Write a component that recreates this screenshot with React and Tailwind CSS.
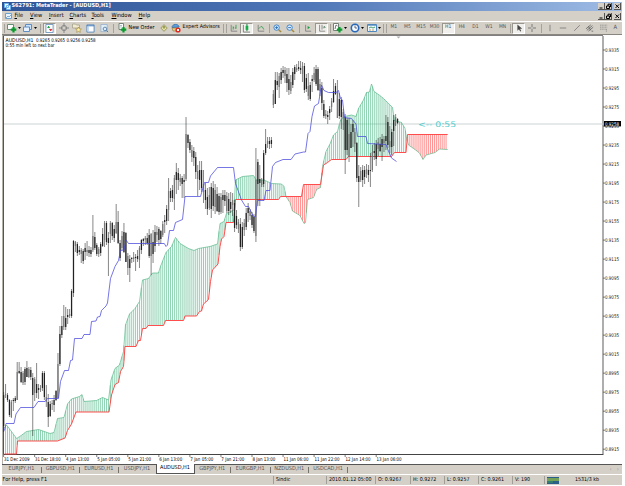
const FIRST_BAR = 3.63;
const BAR_STEP = 1.9406;

// [high, low, body top, body bottom] for every hour
const CANDLES = [
  [392, 432, 395, 426], [384, 398, 394, 395], [393, 402, 395, 400], [399, 417, 400, 415], [400, 418, 402, 417],
  [398, 411, 400, 401], [396, 403, 398, 401], [362, 400, 372, 400], [362, 374, 371, 373], [367, 383, 372, 382],
  [371, 385, 373, 383], [367, 385, 369, 382], [361, 377, 368, 377], [367, 378, 369, 377], [367, 380, 370, 377],
  [373, 436, 378, 395], [377, 401, 379, 393], [363, 398, 384, 393], [384, 399, 388, 390], [385, 392, 388, 390],
  [371, 391, 373, 388], [371, 400, 373, 397], [385, 407, 397, 402], [394, 427, 402, 417], [401, 417, 404, 416],
  [400, 410, 403, 404], [395, 412, 400, 405], [390, 401, 391, 400], [353, 398, 364, 398], [326, 366, 334, 364],
  [316, 338, 326, 335], [305, 330, 316, 327], [307, 330, 318, 327], [309, 324, 315, 317], [309, 318, 314, 316],
  [289, 318, 291, 316], [240, 297, 241, 293], [241, 252, 242, 246], [242, 256, 244, 253], [246, 255, 250, 252],
  [248, 263, 250, 254], [249, 264, 251, 261], [243, 260, 248, 252], [241, 256, 250, 252], [246, 257, 250, 253],
  [247, 257, 250, 254], [215, 252, 236, 250], [232, 250, 237, 248], [243, 256, 245, 254], [247, 257, 249, 254],
  [242, 256, 244, 253], [228, 247, 234, 246], [221, 247, 223, 240], [221, 245, 223, 242], [232, 276, 238, 243],
  [221, 243, 223, 234], [222, 240, 223, 236], [225, 242, 229, 238], [204, 234, 222, 233], [211, 244, 222, 243],
  [240, 261, 243, 258], [231, 250, 236, 248], [223, 253, 232, 252], [232, 262, 233, 262], [253, 275, 256, 268],
  [255, 282, 259, 268], [257, 263, 258, 259], [252, 262, 257, 259], [254, 271, 257, 258], [250, 262, 256, 259],
  [246, 268, 248, 260], [239, 254, 240, 250], [238, 246, 239, 241], [236, 245, 238, 240], [233, 245, 238, 243],
  [229, 258, 235, 256], [233, 275, 234, 256], [230, 263, 242, 254], [225, 252, 232, 246], [226, 242, 232, 235],
  [227, 246, 229, 240], [230, 244, 231, 239], [221, 237, 224, 235], [215, 233, 220, 222], [205, 225, 209, 221],
  [178, 221, 191, 210], [188, 202, 191, 198], [185, 202, 190, 198], [175, 210, 178, 199], [163, 194, 172, 180],
  [168, 190, 173, 180], [174, 186, 178, 182], [176, 198, 178, 184], [174, 198, 180, 182], [117, 181, 134, 179],
  [134, 148, 135, 143], [139, 153, 142, 150], [145, 162, 150, 157], [147, 166, 151, 158], [152, 179, 157, 172],
  [165, 196, 171, 179], [161, 190, 170, 180], [161, 192, 170, 188], [170, 203, 184, 192], [183, 209, 190, 200],
  [188, 215, 197, 209], [187, 210, 195, 208], [183, 218, 187, 209], [181, 211, 188, 206], [184, 214, 190, 207],
  [187, 212, 194, 211], [193, 215, 196, 212], [193, 214, 197, 212], [190, 213, 195, 200], [190, 206, 195, 201],
  [192, 213, 196, 211], [193, 215, 199, 211], [192, 213, 202, 209], [193, 216, 200, 205], [200, 232, 203, 228],
  [210, 229, 216, 225], [219, 233, 222, 229], [218, 251, 224, 247], [222, 249, 227, 247], [219, 236, 223, 230],
  [208, 230, 213, 227], [203, 222, 208, 213], [209, 220, 211, 216], [212, 228, 215, 225], [214, 233, 217, 231],
  [148, 242, 180, 236], [159, 206, 162, 184], [165, 206, 179, 183], [178, 187, 180, 185], [150, 187, 153, 184],
  [129, 155, 144, 153], [137, 148, 141, 144], [137, 149, 141, 144], [137, 148, 140, 144], [90, 108, 94, 105],
  [72, 104, 80, 104], [72, 90, 81, 85], [73, 98, 76, 87], [68, 84, 72, 80], [66, 78, 70, 73],
  [67, 83, 70, 76], [68, 92, 74, 83], [68, 95, 79, 90], [75, 94, 82, 91], [68, 88, 72, 85],
  [65, 80, 67, 74], [64, 72, 68, 70], [61, 71, 67, 69], [61, 74, 68, 70], [62, 82, 66, 74],
  [63, 93, 66, 90], [74, 92, 78, 89], [73, 100, 86, 96], [82, 101, 85, 99], [75, 92, 79, 81],
  [67, 82, 73, 80], [65, 86, 69, 84], [67, 91, 69, 90], [79, 96, 84, 91], [82, 110, 88, 103],
  [100, 118, 104, 116], [110, 119, 114, 116], [111, 124, 115, 117], [106, 120, 109, 113], [98, 112, 101, 107],
  [79, 103, 91, 102], [83, 95, 86, 94], [80, 118, 92, 118], [93, 119, 99, 116], [97, 129, 100, 117],
  [109, 130, 112, 118], [114, 174, 117, 150], [118, 155, 120, 150], [118, 162, 134, 157], [124, 148, 132, 148],
  [120, 147, 124, 132], [128, 152, 132, 144], [142, 182, 143, 178], [165, 207, 176, 182], [167, 182, 171, 180],
  [165, 187, 170, 180], [166, 184, 170, 177], [164, 178, 169, 174], [165, 182, 170, 175], [153, 187, 170, 171],
  [145, 172, 152, 170], [143, 160, 151, 153], [140, 166, 144, 159], [138, 156, 142, 149], [137, 152, 144, 151],
  [134, 161, 139, 147], [136, 152, 139, 143], [115, 150, 136, 141], [117, 148, 122, 145], [126, 153, 141, 147],
  [129, 155, 132, 147], [115, 146, 120, 131], [114, 126, 117, 123], [118, 124, 119, 123],
];

const BASE_LINE = [
  [4.5, 430.5], [6, 423.5], [14, 423.5], [16, 414], [20.5, 407.5], [34, 407.5], [38, 401.5], [45, 401.5], [47.5, 398.5],
  [58.5, 398.5], [60.5, 381.5], [64.5, 370.5], [68.5, 370.5], [70.5, 360.5], [72.5, 360], [74.5, 338.5], [82, 338.5],
  [84, 334.5], [90, 334.5], [91.5, 321.5], [96, 321], [97.5, 317], [100, 316.5], [101.5, 310.5], [106, 306], [107.5, 303],
  [110.5, 278.5], [115, 266.5], [118.5, 260.5], [120.5, 250.5], [124, 250], [126, 240], [128.5, 243.5], [164.3, 243.5],
  [166, 246.5], [167.5, 245], [169.5, 230.5], [173.5, 230.5], [175.5, 222.5], [182.5, 219.5], [185, 196.5], [200.5, 196.5],
  [204.5, 182.5], [208.5, 182.5], [210.5, 176], [217.5, 167.5], [233.5, 167.5], [235.5, 183.5], [241.5, 200], [245.5, 206.5],
  [248.5, 206.5], [253.5, 216.5], [255.5, 216.5], [257.5, 200.5], [264, 200.5], [266, 190.5], [270, 190.5], [272.5, 166.5],
  [275.5, 162.5], [283, 159.5], [291, 159.5], [295, 154], [303.5, 152], [305.5, 152], [308, 133.5], [310, 131.5], [312, 116.5],
  [314.5, 106], [318.5, 103.5], [321.5, 85], [324, 90.5], [328.5, 92.5], [336, 92.5], [338.5, 90.5], [340.5, 98.5], [342.5, 100],
  [344.5, 117.5], [351.5, 118.5], [356, 124], [357.5, 136.5], [366, 136.5], [367.5, 143.5], [386, 144.5], [388, 150],
  [391.5, 158], [396.5, 161.5],
];

const SPAN_A = [
  [4.5, 428], [6.5, 425], [10, 429.5], [16.5, 438.5], [20.5, 436], [26.5, 431.5], [38.5, 429.5], [50, 433.5], [54, 432.5],
  [57.5, 418.5], [64, 417.5], [67.5, 404], [71.5, 399], [79.5, 396.5], [82, 394.5], [84, 401.5], [96.5, 400.5], [102.5, 397.5],
  [108.5, 400], [111, 380], [115, 368.5], [119.5, 365], [123.5, 351.5], [125.5, 325], [129.5, 314], [135, 308.5], [139.5, 301.5],
  [142.5, 280], [148.5, 278.5], [152.5, 273], [158.5, 273], [160.5, 266.5], [166, 252.5], [171.5, 246.5], [175.5, 237.5],
  [180, 243.5], [188.5, 248.5], [194, 250.5], [198.5, 248.5], [210, 246.5], [217.5, 244], [220, 223.5], [224, 221.5],
  [226.5, 213.5], [234, 210], [235.5, 180], [242.5, 176.5], [253.5, 175.5], [256, 180], [264, 180], [271.5, 183.5],
  [281.5, 184], [284, 186.5], [286, 196.5], [290, 202.5], [292.5, 211], [300, 215.5], [304, 223.5], [305.5, 222.5],
  [307.5, 199.5], [313.5, 197.5], [316.5, 189.5], [320.5, 187.5], [322.5, 166.5], [326, 151.5], [330, 144], [333.5, 135],
  [337.5, 131.5], [340.5, 120], [344.5, 116.5], [351.5, 115], [356, 116.5], [358.5, 108.5], [363.5, 100], [366.5, 92.5],
  [369.5, 92], [371.5, 84], [374, 91.5], [378.5, 94.5], [383.5, 98.5], [388.5, 103.5], [392.5, 107.5], [394.5, 120.5],
  [401.5, 122.5], [405, 128.5], [406.5, 138.5], [408.5, 145], [415, 149.5], [419.5, 153], [423, 159.5], [426, 155],
  [435, 152.5], [439.5, 149], [447.7, 149.5],
];

const SPAN_B = [
  [4.5, 454], [16.5, 454], [17.5, 441], [57.5, 441], [65, 438], [67.5, 430.5], [71.5, 424], [76, 412], [109, 412], [111.5, 395],
  [115, 384.5], [118.5, 382.5], [120.5, 371.5], [123.5, 366.5], [125, 346.5], [136, 346.5], [138.5, 340.5], [140.5, 340.5],
  [142.5, 328.5], [146, 328.5], [148, 325.5], [163.5, 325.5], [165.5, 320.5], [183.5, 320.5], [185, 316], [196.5, 316],
  [199.5, 311.5], [201.5, 311], [203.5, 304], [208.5, 299.5], [210.5, 281.5], [212.5, 270], [218, 264], [220, 246.5],
  [221.5, 239], [224, 236.5], [226, 222.5], [233.5, 222.5], [235.5, 199.5], [278.5, 199.5], [280.5, 196.5], [301.5, 196.5],
  [303.5, 184.5], [320.5, 184.5], [323.5, 165], [327.5, 162.5], [331.5, 159.5], [346, 159.5], [348.5, 156.5], [391.5, 156.5],
  [394.5, 152.5], [406, 152.5], [407.5, 134.5], [447.7, 134.5],
];

const DATES = [
  '31 Dec 2009', '31 Dec 18:00', '4 Jan 13:00', '5 Jan 05:00', '5 Jan 21:00', '6 Jan 13:00', '7 Jan 05:00',
  '7 Jan 21:00', '8 Jan 13:00', '11 Jan 06:00', '11 Jan 22:00', '12 Jan 14:00', '13 Jan 06:00',
];

const PRICES = Array.from({ length: 22 }, (_, i) => (0.9335 - i * 0.002).toFixed(4));

const toPoints = (line) => line.map((p) => p.join(',')).join(' ');

function valueAt(line, x) {
  for (let i = 1; i < line.length; i++) {
    const [x0, y0] = line[i - 1];
    const [x1, y1] = line[i];
    if (x <= x1) return y0 + ((y1 - y0) * (x - x0)) / (x1 - x0);
  }
  return line[line.length - 1][1];
}

function Label({ width, children, ...rest }) {
  return <text textLength={width} lengthAdjust="spacingAndGlyphs" {...rest}>{children}</text>;
}

function Chart() {
  const hatch = [];
  for (let i = 1; i < 229; i++) {
    const x = FIRST_BAR + i * BAR_STEP;
    hatch.push({ x, a: valueAt(SPAN_A, x), b: valueAt(SPAN_B, x) });
  }

  return (
    <svg
      width="620"
      height="429"
      viewBox="2 35 620 429"
      className="block shrink-0 bg-white"
      fontFamily="'DejaVu Sans Condensed', 'DejaVu Sans', sans-serif"
      fontSize="5.2"
      textRendering="geometricPrecision"
    >
      <path d="M2 35.5H603" stroke="#808080" />
      <path d="M2.5 35V464" stroke="#b5b2ac" />
      <path d="M3.5 36V454.5" stroke="#555" />
      <path d="M4 454.5H603.5" stroke="#444" />
      <path d="M603 36V454" stroke="#777" strokeWidth="1.2" />

      {/* Bid line */}
      <path d="M4 124H603" stroke="#ccd3d3" />

      {/* Cloud */}
      {hatch.map((h) => (
        <path key={h.x} d={`M${h.x} ${h.a}V${h.b}`} stroke={h.a < h.b ? '#38b078' : '#ff4040'} strokeWidth=".57" />
      ))}
      <polyline points={toPoints(SPAN_A)} fill="none" stroke="#5cb98b" strokeWidth=".7" />
      <polyline points={toPoints(SPAN_B)} fill="none" stroke="#ff4545" strokeWidth=".95" />

      {CANDLES.map(([high, low, top, bottom], i) => {
        const x = FIRST_BAR + i * BAR_STEP;
        return (
          <g key={i}>
            <path d={`M${x} ${high}V${low}`} stroke="#222" strokeWidth=".55" />
            <path d={`M${x} ${top}V${bottom}`} stroke={i % 3 === 1 ? '#777' : '#222'} strokeWidth="1.25" />
          </g>
        );
      })}
      <polyline points={toPoints(BASE_LINE)} fill="none" stroke="#4848dc" strokeWidth=".75" />

      <path d="M396.5 36.5h4l-2 2z" fill="#b0b0b0" />
      <Label x="5.5" y="41.6" width="28">AUDUSD,H1</Label>
      <Label x="36" y="41.6" width="59.5">0.9265 0.9265 0.9256 0.9258</Label>
      <Label x="5.5" y="46.6" width="49">0:55 min left to next bar</Label>
      <Label x="418" y="127" width="38" fontFamily="'DejaVu Sans', sans-serif" fontSize="7.6" fill="#4fcccc">&lt;-- 0:55</Label>

      {PRICES.map((price, i) => {
        const y = 50 + i * 19.01;
        return (
          <g key={price}>
            <path d={`M603 ${y}h2`} stroke="#444" strokeWidth=".7" />
            <Label x="605" y={y + 1.9} width="14" fill="#222">{price}</Label>
          </g>
        );
      })}
      <rect x="604" y="121" width="17" height="5.4" fill="#000" />
      <Label x="605" y="125.6" width="14" fill="#fff">0.9258</Label>

      {DATES.map((date, i) => {
        const x = 3.6 + i * 31.05;
        return (
          <g key={date}>
            <path d={`M${x} 454v3`} stroke="#444" strokeWidth=".7" />
            <Label x={x + 0.4} y="461" width={i < 2 ? 25.5 : i > 8 ? 25 : 23}>{date}</Label>
          </g>
        );
      })}
    </svg>
  );
}

function Icon({ children, size = 10 }) {
  return (
    <svg width={size} height={size} viewBox="0 0 10 10" fill="none" strokeWidth="1" className="shrink-0">
      {children}
    </svg>
  );
}

const Caret = () => (
  <svg width="3" height="2" viewBox="0 0 3 2" className="ml-px shrink-0"><path d="M0 0h3L1.5 2z" fill="#000" /></svg>
);

const Plus = () => <path d="M6.5 4v5.5M3.8 6.7h5.5" stroke="#0b9b2d" strokeWidth="2.2" />;

const Sep = () => <div className="h-[9px] w-px shrink-0 bg-[#a5a29b]" />;

function Slot({ className, active, children }) {
  return (
    <div className={`flex h-full shrink-0 items-center justify-center ${className}`}>
      {active ? (
        <div className="flex h-[11px] w-[13px] shrink-0 items-center justify-center border border-[#99968f] border-r-white border-b-white bg-[#f1efeb]">
          {children}
        </div>
      ) : children}
    </div>
  );
}

function WindowButtons() {
  return (
    <div className="ml-auto flex h-[7px] pr-px">
      {['M1.5 5h3', 'M1.5 3h3v2.5h-3zM3 3V1.2h2.5V4', 'M1.5 1.5l3.5 3.5M5 1.5L1.5 5'].map((d, i) => (
        <div key={d} className={`h-[7px] w-[7px] border-r border-b border-[#55534f] bg-[#d4d0c8] ${i === 2 ? 'ml-[2px]' : 'ml-[0.5px]'}`}>
          <svg width="7" height="7" viewBox="0 0 7 7" className="block"><path d={d} fill="none" stroke="#000" /></svg>
        </div>
      ))}
    </div>
  );
}

function MenuItem({ label, className }) {
  return (
    <span className={`shrink-0 ${className}`}>
      <span className="underline decoration-[0.5px] underline-offset-1">{label[0]}</span>{label.slice(1)}
    </span>
  );
}

function Toolbar() {
  return (
    <div className="flex h-[14px] items-center overflow-hidden border-t border-b border-t-white border-b-[#89867f] bg-[#d4d0c8]">
      <Slot className="w-[4px]"><Sep /></Slot>
      <Slot className="w-[15px]">
        <Icon><path d="M.5 1.5h6v5h-6z" fill="#fff" stroke="#648f73" /><Plus /></Icon><Caret />
      </Slot>
      <Slot className="w-[17px]">
        <Icon><path d="M2.5 1.5h6v5h-6z" fill="#cce3fa" stroke="#5e8ec4" /><path d="M.5 4h6v4.5h-6z" fill="#e8f3ff" stroke="#5e8ec4" /></Icon><Caret />
      </Slot>
      <Slot className="w-[4px]"><Sep /></Slot>
      <Slot className="w-[15px]" active>
        <Icon size={9}><path d="M1 .5h8v9H1z" fill="#fff" stroke="#6b93bd" /><path d="M3 4l1-1.5L5 4z" fill="#119b3c" stroke="#119b3c" /><path d="M5 6h2.6L6.3 7.6z" fill="#d92727" stroke="#d92727" /></Icon>
      </Slot>
      <Slot className="w-[13px]"><Icon><circle cx="5" cy="5" r="2.6" stroke="#888" /><path d="M5 0v4M5 6v4M0 5h4M6 5h4" stroke="#888" /></Icon></Slot>
      <Slot className="w-[14px]"><Icon><path d="M.5 1h3l1 1h3v3h-7z" fill="#f1ead0" stroke="#a3a18b" strokeWidth=".8" /><path d="M6.5 4l.9 1.8 2 .2-1.5 1.4.4 2-1.8-1-1.8 1 .4-2L3.6 6l2-.2z" fill="#fff0a4" stroke="#98823b" strokeWidth=".6" /></Icon></Slot>
      <Slot className="w-[13px]"><Icon size={9}><path d="M1 1h8v8H1z" fill="#fff" stroke="#5384bb" /><path d="M1 2h8" stroke="#4178bb" /><path d="M2.5 2v6" stroke="#a8c9ec" /></Icon></Slot>
      <Slot className="w-[14px]"><Icon size={9}><path d="M1 .5h7v8H1z" fill="#e1edf7" stroke="#9bb3cc" /><circle cx="5.5" cy="5.5" r="2" fill="#d8edff" stroke="#587ea5" /><path d="M7 7l2 2" stroke="#547595" /></Icon></Slot>
      <Slot className="w-[4px]"><Sep /></Slot>
      <Slot className="w-[13px]"><Icon><path d="M2 .5h4.5v6H2z" fill="#fff" stroke="#75847a" /><path d="M3 2.5h2M3 4h2" stroke="#7b9aab" strokeWidth=".6" /><Plus /></Icon></Slot>
      <span className="w-[29px] shrink-0 pl-[0.5px] text-[5.4px] whitespace-nowrap">New Order</span>
      <Slot className="w-[13px]"><Icon size={8}><path d="M5 .8L9 5 5 9.2 1 5z" fill="#e6e4a3" stroke="#8b8a52" /><path d="M5 3v3M3.8 4.5L5 3l1.2 1.5" stroke="#696827" /></Icon></Slot>
      <Slot className="w-[12px]"><Icon><path d="M1 4.5C1 .5 8 .5 8 4z" fill="#5f9ed8" stroke="#3c79b4" /><path d="M1 5h7v3H2z" fill="#edc980" stroke="#8e763e" strokeWidth=".6" /><circle cx="7" cy="7" r="2.6" fill="#dc2b20" /><path d="M6 6h2v2H6z" fill="#fff" /></Icon></Slot>
      <span className="w-[40.5px] shrink-0 pl-[0.5px] text-[5.3px] whitespace-nowrap">Expert Advisors</span>
      <Slot className="w-[2px]"><Sep /></Slot>
      <Slot className="w-[3px]"><Sep /></Slot>
      <Slot className="w-[12px]"><Icon size={8}><path d="M1.5 1v8H9" stroke="#777" /><path d="M4 3v4M4 4.5h1M7.5 1v5M6 5h1.5" stroke="#279b48" /></Icon></Slot>
      <Slot className="w-[14px]" active><Icon size={9}><path d="M1.5 1v8H9" stroke="#777" /><path d="M5.5 0v8" stroke="#08752c" /><path d="M4 2h3v4.5H4z" fill="#16ad4a" /></Icon></Slot>
      <Slot className="w-[14px]"><Icon size={8}><path d="M1.5 1v8H9" stroke="#777" /><path d="M2 6l3-3 2 1 1.5 3" stroke="#279b48" /></Icon></Slot>
      <Slot className="w-[3px]"><Sep /></Slot>
      <Slot className="w-[13px]"><Icon size={9}><circle cx="4" cy="4" r="3" fill="#d8edff" stroke="#367dca" /><path d="M2.4 4h3.2M4 2.4v3.2" stroke="#286ab1" /><path d="M6.3 6.3L9 9" stroke="#a58a38" strokeWidth="1.6" /></Icon></Slot>
      <Slot className="w-[14px]"><Icon size={9}><circle cx="4" cy="4" r="3" fill="#d8edff" stroke="#367dca" /><path d="M2.4 4h3.2" stroke="#286ab1" /><path d="M6.3 6.3L9 9" stroke="#a58a38" strokeWidth="1.6" /></Icon></Slot>
      <Slot className="w-[4px]"><Sep /></Slot>
      <Slot className="w-[13px]"><Icon size={8}><path d="M2 1v8h7" stroke="#777" /><path d="M4.5 2.5v4l3-2z" fill="#159e3f" /></Icon></Slot>
      <Slot className="w-[14px]" active><Icon size={8}><path d="M2 1v8h7M5 1v6" stroke="#777" /><path d="M6 4h3M7.5 2.5L9 4 7.5 5.5" stroke="#588566" /></Icon></Slot>
      <Slot className="w-[3px]"><Sep /></Slot>
      <Slot className="w-[17.5px]"><Icon><path d="M.5.5h5v7h-5z" fill="#fff" stroke="#758078" /><path d="M2 6l1-4 1.5 1" stroke="#777" /><Plus /></Icon><Caret /></Slot>
      <Slot className="w-[16.5px]"><Icon><circle cx="5" cy="5" r="3.7" fill="#f7fbff" stroke="#2868b8" strokeWidth="1.6" /><path d="M5 2.5V5h2" stroke="#35485e" strokeWidth=".8" /></Icon><Caret /></Slot>
      <Slot className="w-[16.5px]"><Icon><path d="M.5 1.5h9v7h-9z" fill="#eef8ff" stroke="#4d87be" /><path d="M1 2.2h8" stroke="#4d87be" /><path d="M2 5l2-1 2 1 2-1" stroke="#50a169" /><path d="M2 7h6" stroke="#c79c68" strokeDasharray="2 1" /></Icon><Caret /></Slot>
      <Slot className="w-[3px]"><Sep /></Slot>
      <Slot className="w-[2px]"><Sep /></Slot>
      {['M1', 'M5', 'M15', 'M30', 'H1', 'H4', 'D1', 'W1', 'MN'].map((tf) => (
        <Slot key={tf} className="w-[13.6px] text-[5px] text-[#555]" active={tf === 'H1'}>{tf}</Slot>
      ))}
      <Slot className="w-[3px]"><Sep /></Slot>
      <Slot className="w-[13px]" active><Icon size={8}><path d="M3 .5v8l2-2 1.5 3 1.2-.6L6.3 6H9z" fill="#444" /></Icon></Slot>
      <Slot className="w-[14px]"><Icon size={8}><path d="M5 0v4M5 6v4M0 5h4M6 5h4" stroke="#666" /></Icon></Slot>
      <Slot className="w-[4px]"><Sep /></Slot>
      <Slot className="w-[13px]"><Icon size={8}><path d="M5 1v8" stroke="#777" /></Icon></Slot>
      <Slot className="w-[14px]"><Icon size={8}><path d="M1 5h8" stroke="#777" /></Icon></Slot>
      <Slot className="w-[13px]"><Icon size={8}><path d="M1.5 8.5l7-7" stroke="#777" /></Icon></Slot>
      <Slot className="w-[14px]"><Icon size={8}><path d="M0 6l6-5M1 8l7-6M3 9l6-5M3 3l3 5M7 9h2" stroke="#555" strokeWidth=".9" /></Icon></Slot>
      <Slot className="w-[14px]"><Icon size={8}><path d="M0 1.5h9M0 4h9M0 6.5h7M8 6v4" stroke="#777" strokeWidth=".8" strokeDasharray="1.5 .6" /></Icon></Slot>
      <Slot className="w-[8px] text-[5.8px] text-[#555]">A</Slot>
    </div>
  );
}

const TABS = [
  ['EURJPY,H1', 'w-[39px]'], ['GBPUSD,H1', 'w-[38.5px]'], ['EURUSD,H1', 'w-[38.5px]'], ['USDJPY,H1', 'w-[37px]'],
  ['AUDUSD,H1', 'w-[39px]'], ['GBPJPY,H1', 'w-[36.5px]'], ['EURGBP,H1', 'w-[39.5px]'], ['NZDUSD,H1', 'w-[38.5px]'],
  ['USDCAD,H1', 'w-[39px]'],
];

function Tabs() {
  return (
    <div className="flex h-[10px] items-start border-t border-[#555] bg-[#d4d0c8] pl-[0.5px] text-[5.5px] leading-[9px] text-[#555]">
      {TABS.map(([label, width], i) => (
        <div
          key={label}
          className={`flex shrink-0 items-center justify-center ${width} ${
            i === 4 ? '-mt-px h-[10px] border-x border-b border-[#555] bg-white text-black' : 'h-[9px]'
          }`}
        >
          <span className="flex-1 pt-[0.5px] text-center">{label}</span>
          {i !== 3 && i !== 4 && <span className="h-[6px] w-px bg-[#77746e]" />}
        </div>
      ))}
      <span className="ml-auto pr-[3px] text-[6px] text-[#99968f]">‹&nbsp;&nbsp;&nbsp;›</span>
    </div>
  );
}

const STATUS = [
  ['Sindic', 'w-[53px]'], ['2010.01.12 05:00', 'w-[49px]'], ['O: 0.9267', 'w-[35px]'], ['H: 0.9272', 'w-[34px]'],
  ['L: 0.9257', 'w-[34px]'], ['C: 0.9261', 'w-[34px]'], ['V: 190', 'w-[32px]'],
];

function StatusBar() {
  return (
    <div className="flex h-[11px] items-center border-t border-white bg-[#d4d0c8] text-[5.3px] leading-[10px]">
      <span className="w-[271px] shrink-0 pl-[0.5px] text-[5.5px]">For Help, press F1</span>
      {STATUS.map(([text, width]) => (
        <span key={text} className={`h-[8px] shrink-0 border-l border-[#a19e97] pl-[2px] leading-[8px] whitespace-nowrap ${width}`}>{text}</span>
      ))}
      <span className="flex h-[8px] w-[30px] shrink-0 items-center border-l border-[#a19e97] pl-[2px]">
        <svg width="12" height="7" viewBox="0 0 12 7">
          <path d="M0 0h12v7H0z" fill="#2b5f87" />
          <path d="M1 1v3M3 1v3M5 1v3M7 1v3M9 1v3M11 1v3" stroke="#95be42" strokeWidth="1.4" />
          <path d="M1 4v2M3 4v2M5 4v2" stroke="#3d9b57" />
        </svg>
      </span>
      <span className="pl-px whitespace-nowrap">1531/3 kb</span>
    </div>
  );
}

export default function App() {
  return (
    <div className="h-[486px] w-[625px] overflow-hidden bg-white pt-[2px] pl-[2px] text-black [font-family:'DejaVu_Sans_Condensed','DejaVu_Sans',sans-serif] [text-rendering:geometricPrecision]">
      <div className="flex w-[620px] flex-col">
        <div className="flex h-[9px] items-center bg-linear-to-r from-[#2f5597] via-[#5077b7] to-[#9fbce4] pl-[1.5px]">
          <svg width="7" height="7" viewBox="0 0 7 7"><path d="M.5.5h4v4h-4zM2.5 2.5h4v4h-4z" fill="#e9f5ff" stroke="#6db2ef" /></svg>
          <span className="ml-px text-[5.5px] leading-[9px] font-bold whitespace-nowrap text-white">S62791: MetaTrader - [AUDUSD,H1]</span>
          <WindowButtons />
        </div>
        <div className="flex h-[10px] items-center bg-[#d4d0c8] pl-[3px] text-[5.7px] leading-[10px]">
          <svg width="7" height="7" viewBox="0 0 7 7"><path d="M.5.5h6v5h-6z" fill="#e9f5ff" stroke="#6da2d0" /><path d="M1 5l2-2 1 1 2-2" stroke="#5b8dbd" fill="none" strokeWidth=".7" /></svg>
          <MenuItem label="File" className="ml-[2.5px] w-[15.5px]" />
          <MenuItem label="View" className="w-[19px]" />
          <MenuItem label="Insert" className="w-[20.5px]" />
          <MenuItem label="Charts" className="w-[22px]" />
          <MenuItem label="Tools" className="w-[20px]" />
          <MenuItem label="Window" className="w-[27px]" />
          <MenuItem label="Help" className="w-[14px]" />
          <WindowButtons />
        </div>
        <Toolbar />
        <Chart />
        <Tabs />
        <StatusBar />
      </div>
    </div>
  );
}
